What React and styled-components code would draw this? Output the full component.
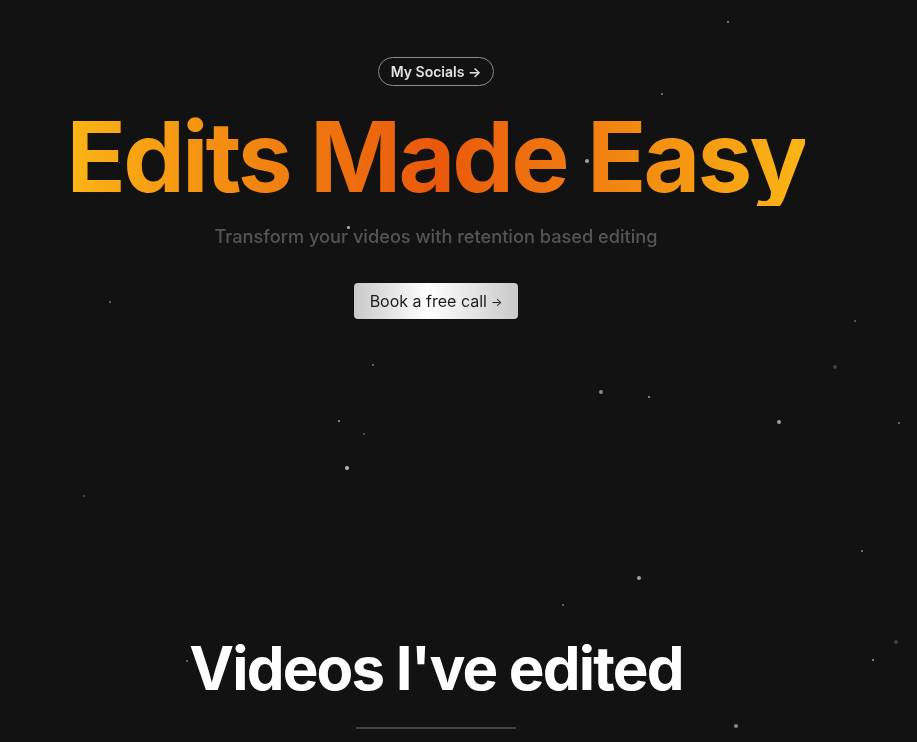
import styled, { createGlobalStyle } from "styled-components"

const stars = [
    { x: 728, y: 22, s: 2, o: 0.5 },
    { x: 662, y: 94, s: 2, o: 0.5 },
    { x: 119, y: 162, s: 1, o: 0.4 },
    { x: 587, y: 161, s: 4, o: 0.6 },
    { x: 348, y: 227, s: 3, o: 0.7 },
    { x: 110, y: 302, s: 2, o: 0.4 },
    { x: 855, y: 321, s: 2, o: 0.4 },
    { x: 373, y: 365, s: 2, o: 0.45 },
    { x: 835, y: 367, s: 4, o: 0.2 },
    { x: 601, y: 392, s: 4, o: 0.5 },
    { x: 649, y: 397, s: 2, o: 0.6 },
    { x: 339, y: 421, s: 2, o: 0.6 },
    { x: 364, y: 434, s: 2, o: 0.3 },
    { x: 779, y: 422, s: 4, o: 0.6 },
    { x: 899, y: 423, s: 2, o: 0.45 },
    { x: 347, y: 468, s: 4, o: 0.7 },
    { x: 84, y: 496, s: 2, o: 0.25 },
    { x: 862, y: 551, s: 2, o: 0.5 },
    { x: 639, y: 578, s: 4, o: 0.6 },
    { x: 563, y: 605, s: 2, o: 0.4 },
    { x: 896, y: 642, s: 4, o: 0.2 },
    { x: 873, y: 660, s: 2, o: 0.6 },
    { x: 187, y: 661, s: 2, o: 0.4 },
    { x: 736, y: 726, s: 4, o: 0.5 },
]

export default function App(){
    return(
        <>
            <GlobalStyle/>
            <Page>
                <StarField>
                    {stars.map((st, i) => (
                        <Star key={i} $size={st.s} style={{ left: st.x - st.s / 2, top: st.y - st.s / 2, opacity: st.o }}/>
                    ))}
                </StarField>
                <Hero>
                    <SocialsPill>My Socials →</SocialsPill>
                    <Title>Edits Made Easy</Title>
                    <Subtitle>Transform your videos with retention based editing</Subtitle>
                    <CallButton>Book a free call <SmallArrow>→</SmallArrow></CallButton>
                </Hero>
                <VideosSection>
                    <SectionTitle>Videos I've edited</SectionTitle>
                    <Divider/>
                </VideosSection>
            </Page>
        </>
    )
}

const GlobalStyle = createGlobalStyle`
    html, body {
        margin: 0;
        padding: 0;
        background: #121212;
        font-family: Inter, "Noto Sans", sans-serif;
        overflow: hidden;
    }
`

const Page = styled.div`
    position: relative;
    width: 872px;
    min-height: 742px;
    display: flex;
    flex-direction: column;
    align-items: center;
`

const StarField = styled.div`
    position: fixed;
    inset: 0;
    pointer-events: none;
`

const Star = styled.span`
    position: absolute;
    width: ${p => p.$size}px;
    height: ${p => p.$size}px;
    border-radius: 50%;
    background: #ffffff;
`

const Hero = styled.section`
    position: relative;
    display: flex;
    flex-direction: column;
    align-items: center;
    padding-top: 57px;
`

const SocialsPill = styled.a`
    display: flex;
    align-items: center;
    height: 29px;
    box-sizing: border-box;
    padding: 0 12px;
    border: 1px solid #8c8c8c;
    border-radius: 999px;
    color: #e2e2e2;
    font-size: 14px;
    font-weight: 600;
`

const Title = styled.h1`
    margin: 22px 0 0;
    font-size: 98px;
    line-height: 1;
    font-weight: 700;
    letter-spacing: -0.03em;
    background: linear-gradient(to right, #fbb515 0%, #ea580c 50%, #fbb515 100%);
    -webkit-background-clip: text;
    background-clip: text;
    color: transparent;
`

const Subtitle = styled.p`
    margin: 19px 0 0;
    font-size: 18.2px;
    font-weight: 500;
    color: #555555;
`

const CallButton = styled.button`
    margin-top: 36px;
    height: 36px;
    padding: 0 16px;
    border: none;
    border-radius: 4px;
    background: linear-gradient(to right, #c9c9c9 0%, #ffffff 45%, #c9c9c9 100%);
    color: #1c1c1c;
    font-family: Inter, sans-serif;
    font-size: 16px;
    display: flex;
    align-items: center;
    gap: 4px;
`

const SmallArrow = styled.span`
    font-size: 12px;
`

const VideosSection = styled.section`
    position: relative;
    margin-top: 319px;
    display: flex;
    flex-direction: column;
    align-items: center;
`

const SectionTitle = styled.h2`
    margin: 0;
    font-size: 60px;
    line-height: 1;
    font-weight: 700;
    letter-spacing: -0.03em;
    color: #ffffff;
`

const Divider = styled.div`
    margin-top: 29px;
    width: 160px;
    height: 2px;
    background: #444444;
`
